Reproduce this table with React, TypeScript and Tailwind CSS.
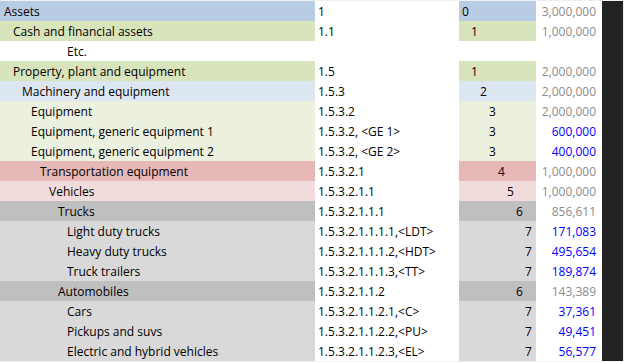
type Row = {
  label: string;
  pad: string;
  code: string;
  level: string;
  levelPad: string;
  value: string;
  input?: boolean;
  bg: string;
};

const ROWS: Row[] = [
  { label: 'Assets', pad: 'pl-[4px]', code: '1', level: '0', levelPad: 'pl-[3px]', value: '3,000,000', bg: 'bg-[#b8cce4]' },
  { label: 'Cash and financial assets', pad: 'pl-[13px]', code: '1.1', level: '1', levelPad: 'pl-[12px]', value: '1,000,000', bg: 'bg-[#d8e4bc]' },
  { label: 'Etc.', pad: 'pl-[67px]', code: '', level: '', levelPad: 'pl-[3px]', value: '', bg: 'bg-white' },
  { label: 'Property, plant and equipment', pad: 'pl-[13px]', code: '1.5', level: '1', levelPad: 'pl-[12px]', value: '2,000,000', bg: 'bg-[#d8e4bc]' },
  { label: 'Machinery and equipment', pad: 'pl-[22px]', code: '1.5.3', level: '2', levelPad: 'pl-[21px]', value: '2,000,000', bg: 'bg-[#dce6f1]' },
  { label: 'Equipment', pad: 'pl-[31px]', code: '1.5.3.2', level: '3', levelPad: 'pl-[30px]', value: '2,000,000', bg: 'bg-[#ebf1de]' },
  { label: 'Equipment, generic equipment 1', pad: 'pl-[31px]', code: '1.5.3.2, <GE 1>', level: '3', levelPad: 'pl-[30px]', value: '600,000', input: true, bg: 'bg-[#ebf1de]' },
  { label: 'Equipment, generic equipment 2', pad: 'pl-[31px]', code: '1.5.3.2, <GE 2>', level: '3', levelPad: 'pl-[30px]', value: '400,000', input: true, bg: 'bg-[#ebf1de]' },
  { label: 'Transportation equipment', pad: 'pl-[40px]', code: '1.5.3.2.1', level: '4', levelPad: 'pl-[39px]', value: '1,000,000', bg: 'bg-[#e6b8b7]' },
  { label: 'Vehicles', pad: 'pl-[49px]', code: '1.5.3.2.1.1', level: '5', levelPad: 'pl-[48px]', value: '1,000,000', bg: 'bg-[#f2dcdb]' },
  { label: 'Trucks', pad: 'pl-[58px]', code: '1.5.3.2.1.1.1', level: '6', levelPad: 'pl-[57px]', value: '856,611', bg: 'bg-[#bfbfbf]' },
  { label: 'Light duty trucks', pad: 'pl-[67px]', code: '1.5.3.2.1.1.1.1,<LDT>', level: '7', levelPad: 'pl-[66px]', value: '171,083', input: true, bg: 'bg-[#d9d9d9]' },
  { label: 'Heavy duty trucks', pad: 'pl-[67px]', code: '1.5.3.2.1.1.1.2,<HDT>', level: '7', levelPad: 'pl-[66px]', value: '495,654', input: true, bg: 'bg-[#d9d9d9]' },
  { label: 'Truck trailers', pad: 'pl-[67px]', code: '1.5.3.2.1.1.1.3,<TT>', level: '7', levelPad: 'pl-[66px]', value: '189,874', input: true, bg: 'bg-[#d9d9d9]' },
  { label: 'Automobiles', pad: 'pl-[58px]', code: '1.5.3.2.1.1.2', level: '6', levelPad: 'pl-[57px]', value: '143,389', bg: 'bg-[#bfbfbf]' },
  { label: 'Cars', pad: 'pl-[67px]', code: '1.5.3.2.1.1.2.1,<C>', level: '7', levelPad: 'pl-[66px]', value: '37,361', input: true, bg: 'bg-[#d9d9d9]' },
  { label: 'Pickups and suvs', pad: 'pl-[67px]', code: '1.5.3.2.1.1.2.2,<PU>', level: '7', levelPad: 'pl-[66px]', value: '49,451', input: true, bg: 'bg-[#d9d9d9]' },
  { label: 'Electric and hybrid vehicles', pad: 'pl-[67px]', code: '1.5.3.2.1.1.2.3,<EL>', level: '7', levelPad: 'pl-[66px]', value: '56,577', input: true, bg: 'bg-[#d9d9d9]' },
];

export default function App() {
  return (
    <div className="w-[624px] h-[362px] flex py-px pr-px bg-[#f0f0f0] font-['Open_Sans',sans-serif] text-[12px] text-black">
      {/* sheet */}
      <div className="w-[602px] flex flex-col">
        {ROWS.map((r, i) => (
          <div key={i} className="flex h-5 leading-5">
            <div className={`w-[315px] pt-px whitespace-nowrap ${r.pad} ${r.bg}`}>{r.label}</div>
            <div className="w-[144px] pt-px pl-[3px] bg-white whitespace-nowrap">{r.code}</div>
            <div className={`w-[77px] pt-px ${r.levelPad} ${r.bg}`}>{r.level}</div>
            <div
              className={`w-[66px] pt-px pr-[6px] bg-white text-right ${
                r.input ? 'text-[#0000ff]' : 'text-[#8c8c8c]'
              }`}
            >
              {r.value}
            </div>
          </div>
        ))}
      </div>
      {/* scrollbar strip */}
      <div className="flex-1 bg-[#222222]" />
    </div>
  );
}
